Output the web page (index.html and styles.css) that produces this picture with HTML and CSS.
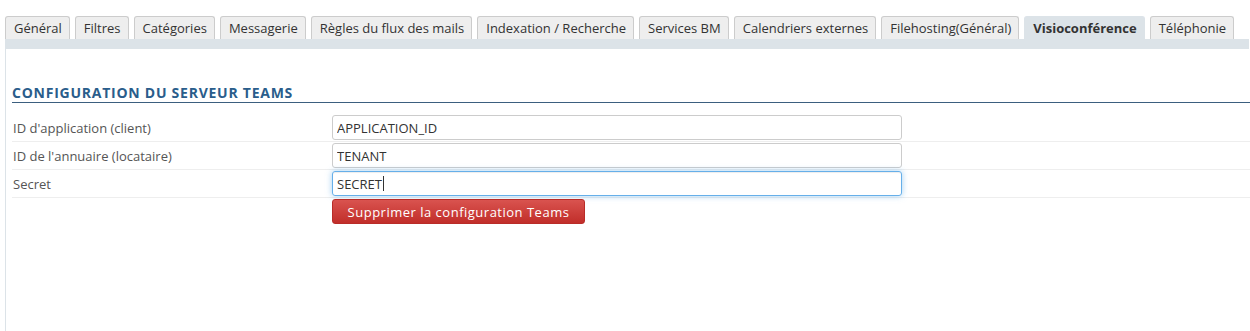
FILE: index.html
```html
<!DOCTYPE html>
<html lang="fr">
<head>
<meta charset="UTF-8" />
<title>Visioconférence</title>
<link rel="stylesheet" href="styles.css">
</head>
<body>
<nav class="tabs">
    <a class="tab" href="#">Général</a>
    <a class="tab" href="#">Filtres</a>
    <a class="tab" href="#">Catégories</a>
    <a class="tab" href="#">Messagerie</a>
    <a class="tab" href="#">Règles du flux des mails</a>
    <a class="tab" href="#">Indexation / Recherche</a>
    <a class="tab" href="#">Services BM</a>
    <a class="tab" href="#">Calendriers externes</a>
    <a class="tab" href="#">Filehosting(Général)</a>
    <a class="tab active" href="#">Visioconférence</a>
    <a class="tab" href="#">Téléphonie</a>
</nav>
<div class="tab-bar"></div>
<main class="panel">
    <h2 class="section-title">Configuration du serveur Teams</h2>
    <form class="config">
        <div class="row">
            <label for="app-id">ID d'application (client)</label>
            <input type="text" id="app-id" value="APPLICATION_ID" />
        </div>
        <div class="row">
            <label for="tenant">ID de l'annuaire (locataire)</label>
            <input type="text" id="tenant" value="TENANT" />
        </div>
        <div class="row">
            <label for="secret">Secret</label>
            <div class="field focused">SECRET<span class="caret"></span></div>
        </div>
        <div class="row last">
            <span></span>
            <button type="button" class="btn-danger">Supprimer la configuration Teams</button>
        </div>
    </form>
</main>
</body>
</html>
```

FILE: styles.css
```css
html, body {
    height: 100%;
}
body {
    margin: 0;
    padding: 16px 0 0 5px;
    box-sizing: border-box;
    font-family: 'Open Sans', 'Liberation Sans', sans-serif;
    font-size: 13px;
    color: #333;
    background-color: #fff;
    display: flex;
    flex-direction: column;
}
.tabs {
    display: flex;
    gap: 5px;
    height: 23px;
}
.tab {
    display: block;
    padding: 0 7px 0 8px;
    line-height: 22px;
    background-color: #eee;
    border: 1px solid #ccc;
    border-bottom: none;
    border-radius: 3px 3px 0 0;
    color: #333;
    text-decoration: none;
    white-space: nowrap;
}
.tab.active {
    background-color: #dce3e8;
    border-color: #dce3e8;
    font-weight: 700;
}
.tab-bar {
    height: 10px;
    margin-right: 1px;
    background-color: #dce3e8;
}
.panel {
    flex: 1;
    border-left: 1px solid #dce3e8;
    padding-left: 6px;
}
.section-title {
    margin: 36px 0 0 0;
    padding-bottom: 1px;
    font-size: 14px;
    line-height: 16px;
    font-weight: 700;
    letter-spacing: 0.75px;
    text-transform: uppercase;
    color: #2a5d8b;
    border-bottom: 1px solid #3b5f7f;
}
.config {
    margin-top: 11px;
}
.row {
    display: grid;
    grid-template-columns: 320px 570px;
    align-items: center;
    padding: 1px 0;
    border-bottom: 1px solid #eee;
}
.row.last {
    border-bottom: none;
}
.row label {
    padding-left: 1px;
    color: #555;
}
.row input,
.field {
    height: 25px;
    box-sizing: border-box;
    padding: 0 4px;
    font-family: inherit;
    font-size: 13px;
    color: #333;
    border: 1px solid #ccc;
    border-radius: 3px;
    outline: none;
}
.field {
    display: flex;
    align-items: center;
}
.field.focused {
    border-color: #66afe9;
    box-shadow: inset 0 1px 1px rgba(0,0,0,.075), 0 0 6px rgba(102,175,233,.6);
}
.caret {
    display: inline-block;
    width: 1px;
    height: 15px;
    margin-left: 1px;
    background-color: #333;
}
.btn-danger {
    justify-self: start;
    width: 253px;
    height: 25px;
    padding: 0;
    font-family: inherit;
    font-size: 13px;
    letter-spacing: 0.5px;
    color: #fff;
    background-image: linear-gradient(to bottom, #d9534f 0, #c12e2a 100%);
    border: 1px solid #b92c28;
    border-radius: 3px;
    cursor: pointer;
}
```
